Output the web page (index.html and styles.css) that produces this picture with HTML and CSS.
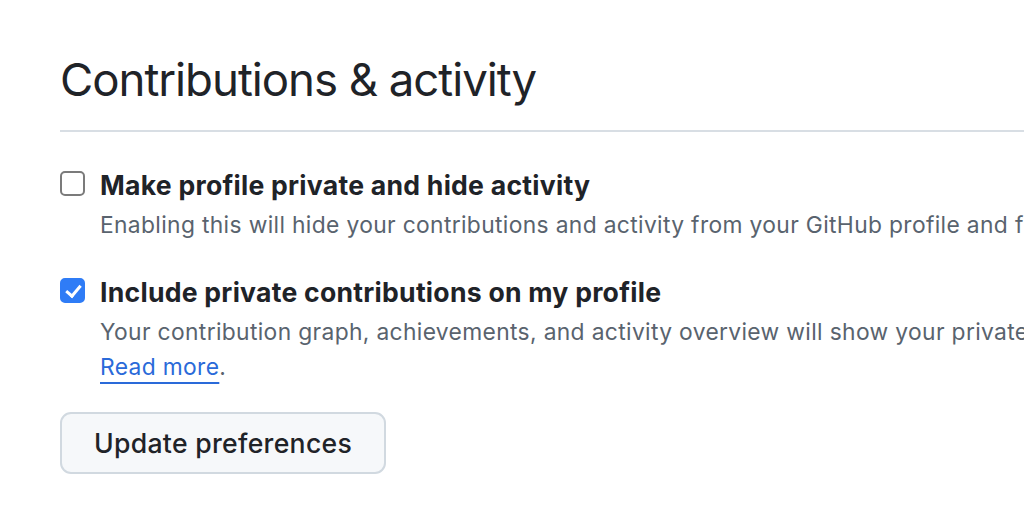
FILE: index.html
```html
<!DOCTYPE html>
<html lang="en">
<head>
<meta charset="utf-8">
<title>Contributions &amp; activity</title>
<link rel="stylesheet" href="styles.css">
</head>
<body>
<main class="page">
  <div class="subhead">
    <h2 class="subhead-heading">Contributions &amp; activity</h2>
  </div>
  <form class="prefs">
    <div class="form-checkbox">
      <input type="checkbox" class="cb" id="private">
      <div class="cb-body">
        <label for="private" class="cb-label">Make profile private and hide activity</label>
        <p class="note">Enabling this will hide your contributions and activity from your GitHub profile and from social features like followers, stars, feeds, leaderboards and releases.</p>
      </div>
    </div>
    <div class="form-checkbox form-checkbox-last">
      <input type="checkbox" class="cb" id="include" checked>
      <div class="cb-body">
        <label for="include" class="cb-label">Include private contributions on my profile</label>
        <p class="note">Your contribution graph, achievements, and activity overview will show your private contributions without revealing any repository or organization information.<br><a href="#" class="link">Read more</a>.</p>
      </div>
    </div>
    <button type="button" class="btn">Update preferences</button>
  </form>
</main>
</body>
</html>
```
FILE: styles.css
```css
html, body {
  margin: 0;
  padding: 0;
  background: #ffffff;
  overflow: hidden;
}
body {
  font-family: Inter, "Noto Sans", "Liberation Sans", sans-serif;
  color: #1f2328;
  width: 1024px;
  height: 530px;
}
.page {
  padding: 46px 0 0 60px;
  width: 1600px;
}
.subhead {
  padding-bottom: 16px;
  border-bottom: 2px solid #d8dee4;
}
.subhead-heading {
  margin: 0;
  font-size: 45.6px;
  line-height: 68px;
  font-weight: 400;
  letter-spacing: -1.05px;
}
.prefs {
  padding-top: 35px;
  display: flex;
  flex-direction: column;
  align-items: flex-start;
}
.form-checkbox {
  display: flex;
  gap: 15px;
  margin-bottom: 32px;
}
.form-checkbox-last {
  margin-bottom: 28px;
}
.cb {
  appearance: none;
  -webkit-appearance: none;
  margin: 4px 0 0 0;
  width: 25px;
  height: 25px;
  border: 2px solid #7b7b7b;
  border-radius: 5px;
  background: #ffffff;
  flex: none;
  position: relative;
}
.cb:checked {
  background: #2f7cf6;
  border-color: #2f7cf6;
}
.cb:checked::after {
  content: "";
  position: absolute;
  left: 6.5px;
  top: 1.5px;
  width: 6px;
  height: 12px;
  border: solid #ffffff;
  border-width: 0 3.5px 3.5px 0;
  transform: rotate(40deg);
}
.cb-body {
  white-space: nowrap;
}
.cb-label {
  display: block;
  font-size: 26.6px;
  line-height: 36px;
  font-weight: 700;
  letter-spacing: 0.25px;
  color: #1f2328;
}
.note {
  margin: 4px 0 0 0;
  font-size: 22.8px;
  line-height: 35px;
  letter-spacing: 0.35px;
  color: #59636e;
}
.link {
  color: #2a6ad9;
  text-decoration: underline;
  text-underline-offset: 7px;
  text-decoration-thickness: 2px;
}
.btn {
  font-family: inherit;
  font-size: 26.6px;
  font-weight: 500;
  letter-spacing: 0.3px;
  color: #1f2328;
  background: #f6f8fa;
  border: 2px solid #d1d9e0;
  border-radius: 11px;
  height: 62px;
  padding: 0 32px;
  cursor: pointer;
}
```
